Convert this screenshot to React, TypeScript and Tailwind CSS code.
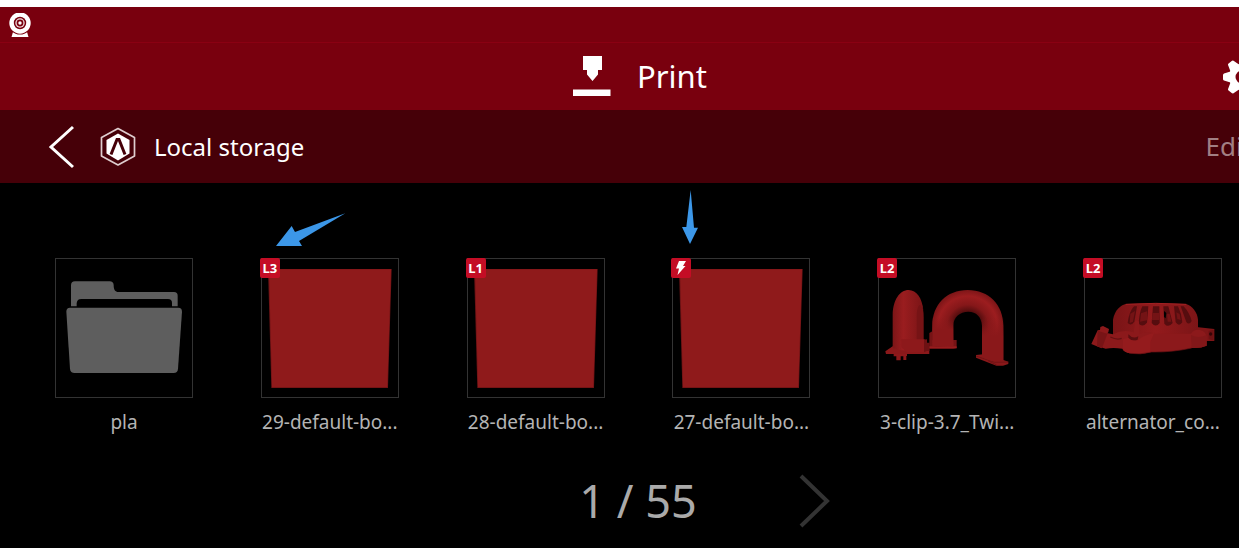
import type { ReactNode } from 'react';

type FileItem = {
  name: string;
  badge?: string;
  art: 'folder' | 'box' | 'pipes' | 'alternator';
  arrow?: 'diagonal' | 'down';
};

const files: FileItem[] = [
  { name: 'pla', art: 'folder' },
  { name: '29-default-bo...', badge: 'L3', art: 'box', arrow: 'diagonal' },
  { name: '28-default-bo...', badge: 'L1', art: 'box' },
  { name: '27-default-bo...', badge: 'bolt', art: 'box', arrow: 'down' },
  { name: '3-clip-3.7_Twi...', badge: 'L2', art: 'pipes' },
  { name: 'alternator_co...', badge: 'L2', art: 'alternator' },
];

function CameraIcon() {
  return (
    <svg viewBox="0 0 22 24" className="h-6 w-[22px]" aria-hidden="true">
      <path d="M4 19 H18 L19.5 24 H2.5 Z" fill="#fff" />
      <circle cx="11" cy="10" r="11.5" fill="#79000e" />
      <circle cx="11" cy="10" r="10.7" fill="#fff" />
      <circle cx="11" cy="10" r="6.2" fill="#79000e" />
      <circle cx="11" cy="10" r="4.7" fill="#f0dcde" />
      <circle cx="11" cy="10" r="3.4" fill="#79000e" />
      <circle cx="11" cy="10" r="1.7" fill="#fff" />
    </svg>
  );
}

function NozzleIcon() {
  return (
    <svg viewBox="0 0 38 41" className="h-[41px] w-[38px]" fill="#fff" aria-hidden="true">
      <path d="M10 0 H29 V14 H25 V18.5 L19.5 25 L14 18.5 V14 H10 Z" />
      <path d="M0 33.5 H37.5 V40 H0 Z" />
    </svg>
  );
}

function GearIcon() {
  return (
    <svg viewBox="-20 -20 40 40" className="size-10" fill="#fff" aria-hidden="true">
      {[0, 1, 2, 3, 4, 5, 6].map((tooth) => (
        <path
          key={tooth}
          d="M-10 -6 L-18 -3.5 Q-19 -3 -19 -2 V2 Q-19 3 -18 3.5 L-10 6 Z"
          transform={`rotate(${(tooth * 360) / 7})`}
        />
      ))}
      <circle r="13" />
      <circle r="6.5" fill="#79000e" />
    </svg>
  );
}

function StorageIcon() {
  return (
    <svg viewBox="0 0 36 40" className="h-10 w-9" aria-hidden="true">
      <path d="M18 1.5 L34.5 10.5 V29 L18 38 L1.5 29 V10.5 Z" fill="none" stroke="#dfcdcf" strokeWidth="1.7" strokeLinejoin="round" />
      <path d="M18 6.5 L29.5 13 V26.5 L18 33.5 L6.5 26.5 V13 Z" fill="#fff" />
      <path d="M11 27.5 L17 12.5 H19 L25 27.5" fill="none" stroke="#460008" strokeWidth="3" />
      <path d="M13.5 28.5 L18 18 L22.5 28.5 L18 33 Z" fill="#fff" />
    </svg>
  );
}

function FolderArt() {
  return (
    <svg viewBox="48 42 408 414" className="h-full w-full" fill="#5e5e5e" aria-hidden="true">
      <path d="M93 184 V121 Q93 109 105 109 H209 Q220 109 221 120 C221 134 225 141 236 141 H402 Q413 141 413 152 V184 H396 V174 Q396 162 384 162 H124 Q111 162 110 175 V184 Z" />
      <path d="M90 188 H415 Q426 188 426 200 L414 371 Q413 384 401 384 H104 Q91 384 90 371 L79 200 Q79 188 90 188 Z" />
    </svg>
  );
}

function BoxArt() {
  return (
    <svg viewBox="34 222 408 414" className="h-full w-full" aria-hidden="true">
      <path d="M52 252 H423 L412 609 H62 Z" fill="#6c1315" />
      <path d="M55 253 H421 L410 607 H64 Z" fill="#8f1a1b" />
    </svg>
  );
}

function PipesArt() {
  return (
    <svg viewBox="43 42 408 414" className="h-full w-full" aria-hidden="true">
      <defs>
        <linearGradient id="leg" x1="0" x2="1" y1="0" y2="0">
          <stop offset="0" stopColor="#7c1517" />
          <stop offset="0.35" stopColor="#9a1d1f" />
          <stop offset="1" stopColor="#7a1416" />
        </linearGradient>
        <radialGradient id="bend" gradientUnits="userSpaceOnUse" cx="309" cy="242" r="108">
          <stop offset="0.38" stopColor="#4f0c0d" />
          <stop offset="0.58" stopColor="#851719" />
          <stop offset="0.82" stopColor="#9c1d1f" />
          <stop offset="1" stopColor="#7c1517" />
        </radialGradient>
        <linearGradient id="rightLeg" x1="0" x2="0" y1="0" y2="1">
          <stop offset="0" stopColor="#8a181a" stopOpacity="0" />
          <stop offset="0.45" stopColor="#8a181a" />
        </linearGradient>
      </defs>
      {/* left pipe, seen from its side */}
      <path d="M146 150 Q177 165 177 215 V290 H148 Z" fill="#761315" />
      <path d="M62 319 L84 304 H150 L194 318 V327 H64 Z" fill="#8a181a" />
      <path d="M84 310 V210 C85 165 105 135 132 135 C156 136 172 158 176 195 C166 168 158 180 156 210 V314 Q120 322 84 310 Z" fill="url(#leg)" />
      <path d="M110 283 H178 L187 287 V318 L178 322 H126 L110 306 Z" fill="#8d191b" />
      <path d="M178 284 L187 283 V293 H195 V318 H186 L178 322 Z" fill="#6d1113" />
      <path d="M87 327 H127 V333 H125 V345 H116 V334 H108 V346 H95 V334 H87 Z" fill="#8d191b" />
      {/* right pipe */}
      <path d="M194 264 L203 259 V285 H276 V309 L266 311 H194 Z" fill="#761315" />
      <path d="M194 304 H276 V310 H194 Z" fill="#981c1e" />
      <path d="M334 330 L355 328 L414 344 L431 350 V357 L415 362 H395 L334 338 Z" fill="#8a181a" />
      <path d="M334 333 L390 352 L431 351 M370 347 L396 360" fill="none" stroke="#641012" strokeWidth="2" />
      <path d="M203 302 V242 C203 180 245 135 309 135 C373 135 416 180 416 242 V346 Q382 354 352 336 V242 C350 215 335 200 311 200 C286 200 266 216 266 242 V302 Q234 308 203 302 Z" fill="url(#bend)" />
      <path d="M203 215 H266 V302 Q234 308 203 302 Z" fill="url(#rightLeg)" />
      <path d="M352 215 H416 V346 Q382 354 352 336 Z" fill="url(#rightLeg)" />
    </svg>
  );
}

function AlternatorArt() {
  return (
    <svg viewBox="46 42 408 414" className="h-full w-full" aria-hidden="true">
      <defs>
        <linearGradient id="dome" x1="0" x2="1" y1="0" y2="0">
          <stop offset="0" stopColor="#791416" />
          <stop offset="0.5" stopColor="#931a1c" />
          <stop offset="1" stopColor="#7c1517" />
        </linearGradient>
      </defs>
      <path d="M380 246 L434 252 V288 H400 L380 280 Z" fill="#7f1517" />
      <path d="M417 258 L432 254 V286 L417 283 Z" fill="#6c1113" />
      <circle cx="423" cy="267" r="5" fill="#340607" />
      <path d="M130 268 V224 C135 196 152 180 170 177 Q258 172 348 177 C368 182 383 202 385 224 V300 L300 318 H200 L130 300 Z" fill="url(#dome)" />
      <path d="M168 178 Q258 172 350 178" fill="none" stroke="#a42123" strokeWidth="3" />
      {/* vent slots */}
      <g fill="#560d0f">
        <path d="M193 184 H202 L194 230 Q184 244 174 234 Q178 200 193 184 Z" />
        <path d="M218 184 H236 L232 233 Q219 248 207 236 Q209 202 218 184 Z" />
        <path d="M250 184 H269 L270 234 Q258 249 246 234 Z" />
        <path d="M281 184 H296 L309 234 Q296 250 284 236 Z" />
        <path d="M313 184 H325 Q336 206 338 232 Q328 246 318 232 Z" />
        <path d="M333 184 H342 Q360 204 366 228 Q358 242 350 231 Z" />
      </g>
      <g fill="#741315">
        <path d="M182 206 L196 198 L190 230 L180 234 Z" />
        <path d="M214 205 L232 199 V226 L211 230 Z" />
        <path d="M248 204 H268 V225 H247 Z" />
        <path d="M292 206 L300 206 L305 230 L294 230 Z" />
        <path d="M320 202 L330 207 L333 225 L323 222 Z" />
      </g>
      <path d="M283 198 L290 204 L288 220 L283 216 Z" fill="#000" />
      <path d="M130 268 Q160 252 192 262 L196 228 Q203 222 208 230 L209 266 Q232 258 254 266 L364 266 Q372 252 390 255 Q408 258 411 276 V302 Q392 311 366 309 Q310 322 246 321 Q220 329 184 325 Q162 322 158 311 Q130 307 108 311 L82 303 L100 262 Z" fill="#8c191b" />
      <path d="M364 270 Q386 282 411 270 V302 Q392 311 366 309 Z" fill="#821719" />
      <path d="M160 283 Q182 272 190 286 Q202 292 214 278 Q238 266 254 264 L242 290 V321 Q220 329 184 325 Q162 322 160 311 Z" fill="#941b1d" />
      <path d="M176 268 Q190 284 206 274 L204 284 Q186 290 176 278 Z" fill="#5c0e10" />
      <path d="M65 297 L84 256 L91 255 L92 246 L100 243 L118 252 L116 262 L113 265 L96 310 Z" fill="#8d191b" />
      <path d="M84 257 L113 266 L97 309 L82 304 Z" fill="#781416" />
      <path d="M122 276 Q142 286 156 280" fill="none" stroke="#651012" strokeWidth="4" />
      <path d="M178 325 Q212 330 246 321 Q310 322 366 309" fill="none" stroke="#681113" strokeWidth="2" />
    </svg>
  );
}

const artwork: Record<FileItem['art'], ReactNode> = {
  folder: <FolderArt />,
  box: <BoxArt />,
  pipes: <PipesArt />,
  alternator: <AlternatorArt />,
};

function Badge({ kind }: { kind: string }) {
  return (
    <span className="absolute -top-px -left-0.5 grid size-5 place-items-center rounded-xs bg-[#c40d25] text-[13px] leading-none font-bold text-white">
      {kind === 'bolt' ? (
        <svg viewBox="0 0 20 20" className="size-5" fill="#fff" aria-hidden="true">
          <path d="M8 3 H15 L12 8 H14.5 L6.5 17 L8 10.5 H5 Z" />
        </svg>
      ) : (
        kind
      )}
    </span>
  );
}

function Arrow({ kind }: { kind: 'diagonal' | 'down' }) {
  if (kind === 'diagonal') {
    return (
      <svg viewBox="78 84 210 99" className="absolute -top-[46px] left-3.5 h-[33px] w-[70px]" fill="#3c97e8" aria-hidden="true">
        <path d="M78 183 L125 123 L135 141 L286 85 L147 168 L156 183 Z" />
      </svg>
    );
  }
  return (
    <svg viewBox="81 15 48 162" className="absolute -top-[69px] left-[9px] h-[54px] w-4" fill="#3c97e8" aria-hidden="true">
      <path d="M107 15 L117 128 H129 L105 177 L81 126 H94 Z" />
    </svg>
  );
}

function FileCard({ file }: { file: FileItem }) {
  return (
    <button type="button" className="flex w-[138px] flex-col items-center gap-2">
      <span className="relative block h-[140px] w-full border border-[#333]">
        {artwork[file.art]}
        {file.badge && <Badge kind={file.badge} />}
        {file.arrow && <Arrow kind={file.arrow} />}
      </span>
      <span className="text-[19px] leading-8 whitespace-nowrap text-[#b4b4b4]">{file.name}</span>
    </button>
  );
}

export default function App() {
  return (
    <div className="min-h-screen overflow-hidden bg-black pt-[7px] font-['Noto_Sans','Open_Sans',sans-serif] text-white shadow-[inset_0_7px_0_#fff]">
      <div className="min-w-[1280px]">
        <div className="flex h-9 items-center border-b border-[#8a0012] bg-[#79000e] px-[9px]">
          <CameraIcon />
        </div>

        <header className="grid h-[67px] grid-cols-[1fr_auto_1fr] items-center bg-[#79000e] px-[18px]">
          <h1 className="col-start-2 flex items-center gap-[26px] text-[31px] leading-none">
            <NozzleIcon />
            Print
          </h1>
          <button type="button" aria-label="Settings" className="justify-self-end">
            <GearIcon />
          </button>
        </header>

        <nav className="flex h-[73px] items-center bg-[#460008] pr-7 pl-12">
          <button type="button" aria-label="Back">
            <svg viewBox="0 0 26 44" className="h-11 w-[26px]" fill="none" stroke="#fff" strokeWidth="3" aria-hidden="true">
              <path d="M25 2 L3 22 L25 42" />
            </svg>
          </button>
          <div className="ml-[26px] flex items-center gap-[18px] text-2xl">
            <StorageIcon />
            Local storage
          </div>
          <button type="button" className="ml-auto text-[26px] text-[#a27f83]">Edit</button>
        </nav>

        <main className="pt-[75px]">
          <div className="flex justify-between pr-[58px] pl-[55px]">
            {files.map((file) => (
              <FileCard key={file.name} file={file} />
            ))}
          </div>

          <div className="grid grid-cols-[1fr_auto_1fr] items-center pt-7 pr-1">
            <span className="col-start-2 text-[45px] leading-[70px] text-[#aaa]">1 / 55</span>
            <button type="button" aria-label="Next page" className="ml-[102px] justify-self-start">
              <svg viewBox="0 0 32 54" className="h-[54px] w-8" fill="none" stroke="#333" strokeWidth="4" aria-hidden="true">
                <path d="M2 2 L28 27 L2 52" />
              </svg>
            </button>
          </div>
        </main>
      </div>
    </div>
  );
}
